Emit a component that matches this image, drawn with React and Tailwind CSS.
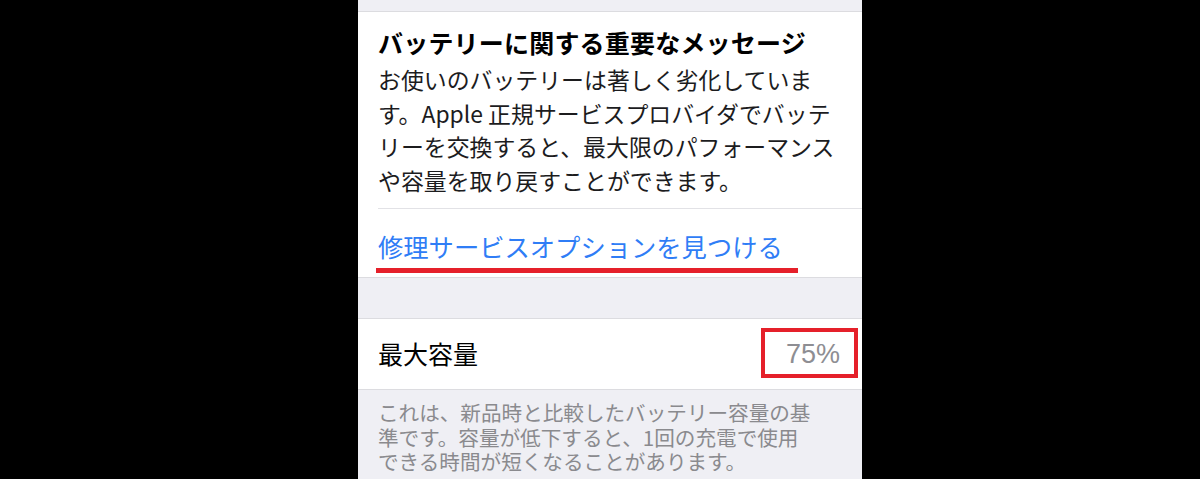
const font = { fontFamily: '"Noto Sans CJK JP", "Noto Sans", sans-serif' };

const App = () => {
  return (
    <div className="w-[1200px] h-[479px] bg-black pl-[358px] overflow-hidden" style={font}>
      <div className="w-[504px] h-full bg-[#efeff4] overflow-hidden">
        {/* top spacer */}
        <div className="h-[12px] border-b border-[#dcdce0]" />

        {/* message card */}
        <section className="bg-white pt-[14px]">
          <div className="px-[20px]">
            <h2 className="text-[25px] leading-[32px] font-bold text-black tracking-[0.2px]">
              バッテリーに関する重要なメッセージ
            </h2>
            <p className="mt-[5px] text-[22.9px] leading-[33.5px] text-[#1c1c1e]">
              <span className="block whitespace-nowrap">お使いのバッテリーは著しく劣化していま</span>
              <span className="block whitespace-nowrap">す。Apple 正規サービスプロバイダでバッテ</span>
              <span className="block whitespace-nowrap">リーを交換すると、最大限のパフォーマンス</span>
              <span className="block whitespace-nowrap">や容量を取り戻すことができます。</span>
            </p>
          </div>
          <div className="mt-[11px] ml-[20px] h-px bg-[#e2e2e6]" />
          <div className="relative h-[68px] px-[20px] pt-[22px]">
            <a className="block text-[25.3px] leading-[30px] text-[#2f7df6] whitespace-nowrap">
              修理サービスオプションを見つける
            </a>
            <div className="absolute left-[18px] top-[59px] w-[422px] h-[5px] bg-[#e5202a]" />
          </div>
        </section>

        {/* gap */}
        <div className="h-[42px] border-y border-[#dcdce0]" />

        {/* max capacity row */}
        <div className="relative bg-white h-[71px] px-[20px] flex items-center justify-between border-b border-[#dcdce0]">
          <span className="text-[25px] text-black">最大容量</span>
          <span className="text-[27px] text-[#8e8e93] pr-[2px]" style={{ fontFamily: '"Liberation Sans", "Noto Sans", sans-serif' }}>
            75%
          </span>
          <div className="absolute left-[403px] top-[9px] w-[97px] h-[50px] border-[4px] border-[#e5202a]" />
        </div>

        {/* footer description */}
        <p className="px-[20px] pt-[10px] text-[20.6px] leading-[24.5px] text-[#8a8a8e]">
          <span className="block whitespace-nowrap">これは、新品時と比較したバッテリー容量の基</span>
          <span className="block whitespace-nowrap">準です。容量が低下すると、1回の充電で使用</span>
          <span className="block whitespace-nowrap">できる時間が短くなることがあります。</span>
        </p>
      </div>
    </div>
  );
};

export default App;
